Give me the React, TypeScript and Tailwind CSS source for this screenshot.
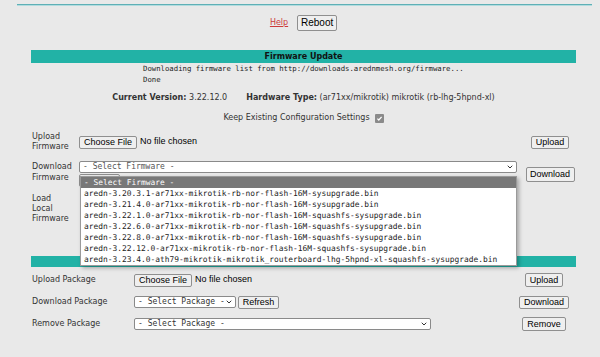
import { ChevronDown } from 'lucide-react'

const firmwareList = [
  'aredn-3.20.3.1-ar71xx-mikrotik-rb-nor-flash-16M-sysupgrade.bin',
  'aredn-3.21.4.0-ar71xx-mikrotik-rb-nor-flash-16M-sysupgrade.bin',
  'aredn-3.22.1.0-ar71xx-mikrotik-rb-nor-flash-16M-squashfs-sysupgrade.bin',
  'aredn-3.22.6.0-ar71xx-mikrotik-rb-nor-flash-16M-squashfs-sysupgrade.bin',
  'aredn-3.22.8.0-ar71xx-mikrotik-rb-nor-flash-16M-squashfs-sysupgrade.bin',
  'aredn-3.22.12.0-ar71xx-mikrotik-rb-nor-flash-16M-squashfs-sysupgrade.bin',
  'aredn-3.23.4.0-ath79-mikrotik-mikrotik_routerboard-lhg-5hpnd-xl-squashfs-sysupgrade.bin',
]

// Chrome-ish grey push button
function Btn({ children, className = '' }: { children?: React.ReactNode; className?: string }) {
  return (
    <button
      className={`flex items-center justify-center bg-[#efefef] border border-[#8f8f8f] rounded-[2px] text-[9px] leading-none text-black font-['Liberation_Sans',Arial,sans-serif] ${className}`}
    >
      {children}
    </button>
  )
}

function Select({ label, className = '' }: { label: string; className?: string }) {
  return (
    <div
      className={`flex items-center justify-between bg-white border border-[#8a8a8a] rounded-[2px] pl-[3px] pr-[2px] text-[8px] leading-none text-[#333] font-['DejaVu_Sans_Mono',monospace] ${className}`}
    >
      <span className="whitespace-pre">{label}</span>
      <ChevronDown size={8} strokeWidth={3} className="text-[#333]" />
    </div>
  )
}

function FileInput({ className = '' }: { className?: string }) {
  return (
    <div className={`flex items-center gap-[3px] ${className}`}>
      <Btn className="w-[58px] h-[13px]">Choose File</Btn>
      <span className="text-[9px] text-black font-['Liberation_Sans',Arial,sans-serif]">No file chosen</span>
    </div>
  )
}

export default function App() {
  return (
    <div className="w-[600px] h-[357px] overflow-hidden bg-[#e9e9e9] text-[#333] text-[8px] font-['DejaVu_Sans',Verdana,sans-serif]">
      {/* top rule */}
      <div className="pt-[4px] pl-[17px] pr-[8px]">
        <div className="h-[2px] border-t border-[#5fb0b6] bg-[#b2dcdf]" />
      </div>

      {/* Help / Reboot */}
      <div className="mt-[9px] pl-[7px] flex items-center justify-center gap-[9px]">
        <a className="text-[#cc3b3b] underline text-[8px]">Help</a>
        <Btn className="w-[40px] h-[16px] text-[10px]">Reboot</Btn>
      </div>

      <div className="ml-[31px] w-[545px] mt-[19px]">
        {/* Firmware section */}
        <div className="h-[13px] bg-[#22b2a6] flex items-center justify-center font-bold text-[#111]">
          Firmware Update
        </div>
        <div className="pl-[112px] font-['DejaVu_Sans_Mono',monospace] text-[7.3px] leading-[11px] text-[#222]">
          <div>Downloading firmware list from http://downloads.arednmesh.org/firmware...</div>
          <div>Done</div>
        </div>

        <div className="mt-[8px] h-[10px] flex items-center justify-center gap-[19px]">
          <span>
            <b>Current Version:</b> 3.22.12.0
          </span>
          <span>
            <b>Hardware Type:</b> (ar71xx/mikrotik) mikrotik (rb-lhg-5hpnd-xl)
          </span>
        </div>

        <div className="mt-[10px] h-[10px] flex items-center justify-center gap-[5px]">
          <span>Keep Existing Configuration Settings</span>
          <span className="w-[9px] h-[9px] rounded-[1px] bg-[#8a8a8a] flex items-center justify-center">
            <svg width="7" height="7" viewBox="0 0 10 10">
              <path d="M2 5.2l2 2 4-4.5" stroke="white" strokeWidth="1.8" fill="none" />
            </svg>
          </span>
        </div>

        {/* Upload firmware */}
        <div className="mt-[9px] grid grid-cols-[48px_445px_52px] items-center">
          <div className="pl-[1px] leading-[10px]">
            Upload
            <br />
            Firmware
          </div>
          <FileInput />
          <div className="flex justify-center">
            <Btn className="w-[38px] h-[13px]">Upload</Btn>
          </div>
        </div>

        {/* Download firmware */}
        <div className="mt-[9px] grid grid-cols-[48px_445px_52px] items-center">
          <div className="pl-[1px] leading-[11px] self-start">
            Download
            <br />
            Firmware
          </div>
          <div className="relative">
            <Select label="- Select Firmware -" className="w-[438px] h-[12px] text-[#555] border-[#6f6f6f]" />
            {/* refresh button, mostly hidden by the open list */}
            <Btn className="mt-[1px] w-[41px] h-[13px]" />
            {/* open dropdown */}
            <div className="absolute left-[1px] top-[15px] w-[437px] bg-white border border-[#9a9a9a] shadow-[2px_2px_4px_rgba(0,0,0,0.3)] font-['DejaVu_Sans_Mono',monospace] text-[7.9px] text-[#222] z-10">
              <div className="h-[11px] leading-[11px] pl-[3px] bg-[#787878] text-white">- Select Firmware -</div>
              {firmwareList.map((f) => (
                <div key={f} className="h-[11px] leading-[11px] pl-[3px] whitespace-pre">
                  {f}
                </div>
              ))}
            </div>
          </div>
          <div className="flex justify-center">
            <Btn className="w-[49px] h-[15px] text-[9.5px]">Download</Btn>
          </div>
        </div>

        {/* Load local firmware */}
        <div className="mt-[7px] grid grid-cols-[48px_445px_52px]">
          <div className="pl-[1px] leading-[10px]">
            Load
            <br />
            Local
            <br />
            Firmware
          </div>
          <div />
          <div />
        </div>

        {/* Packages section (title hidden under the open list) */}
        <div className="mt-[32px] h-[11px] bg-[#22b2a6]" />

        <div className="mt-[2px] grid grid-cols-[103px_378px_64px] h-[22px] items-center">
          <div className="pl-[1px]">Upload Package</div>
          <FileInput />
          <div className="flex justify-center">
            <Btn className="w-[38px] h-[14px]">Upload</Btn>
          </div>
        </div>
        <div className="grid grid-cols-[103px_378px_64px] h-[22px] items-center">
          <div className="pl-[1px]">Download Package</div>
          <div className="flex items-center gap-[2px]">
            <Select label="- Select Package -" className="w-[102px] h-[12px]" />
            <Btn className="w-[41px] h-[13px]">Refresh</Btn>
          </div>
          <div className="flex justify-center">
            <Btn className="w-[50px] h-[13px]">Download</Btn>
          </div>
        </div>
        <div className="grid grid-cols-[103px_378px_64px] h-[22px] items-center">
          <div className="pl-[1px]">Remove Package</div>
          <Select label="- Select Package -" className="w-[297px] h-[12px]" />
          <div className="flex justify-center">
            <Btn className="w-[44px] h-[14px]">Remove</Btn>
          </div>
        </div>
      </div>
    </div>
  )
}
